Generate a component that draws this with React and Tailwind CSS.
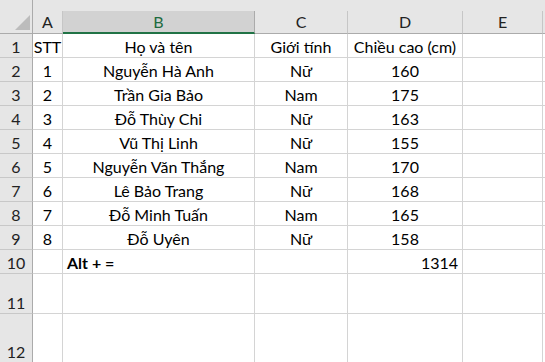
import React from "react";

const cols = [
  { key: "A", w: "w-[30px]", align: "justify-center" },
  { key: "B", w: "w-[192px]", align: "justify-center" },
  { key: "C", w: "w-[93px]", align: "justify-center" },
  { key: "D", w: "w-[115px]", align: "justify-center" },
  { key: "E", w: "w-[80px]", align: "justify-center" },
];

const rows = [
  ["STT", "Họ và tên", "Giới tính", "Chiều cao (cm)", ""],
  ["1", "Nguyễn Hà Anh", "Nữ", "160", ""],
  ["2", "Trần Gia Bảo", "Nam", "175", ""],
  ["3", "Đỗ Thùy Chi", "Nữ", "163", ""],
  ["4", "Vũ Thị Linh", "Nữ", "155", ""],
  ["5", "Nguyễn Văn Thắng", "Nam", "170", ""],
  ["6", "Lê Bảo Trang", "Nữ", "168", ""],
  ["7", "Đỗ Minh Tuấn", "Nam", "165", ""],
  ["8", "Đỗ Uyên", "Nữ", "158", ""],
];

function Cell({ w, children, className = "" }) {
  return (
    <div
      className={`${w} shrink-0 h-full border-r border-[#d4d4d4] flex items-end pb-[3px] overflow-visible whitespace-nowrap ${className}`}
    >
      {children}
    </div>
  );
}

function RowHead({ n }) {
  return (
    <div className="w-[33px] shrink-0 h-full bg-[#e6e6e6] border-r border-[#ababab] border-b border-b-[#c8c8c8] flex items-end justify-center pb-[3px] text-[#222]">
      {n}
    </div>
  );
}

function Row({ n, h = "h-[24px]", children }) {
  return (
    <div className={`flex ${h} shrink-0`}>
      <RowHead n={n} />
      <div className="flex flex-1 h-full border-b border-[#d4d4d4]">{children}</div>
    </div>
  );
}

export default function App() {
  return (
    <div
      className="w-[545px] h-[362px] overflow-hidden bg-white flex flex-col text-[16px] leading-[15px] text-black"
      style={{ fontFamily: "Lato, 'Noto Sans', sans-serif" }}
    >
      {/* Column header */}
      <div className="flex h-[34px] shrink-0 bg-[#e6e6e6]">
        <div className="w-[33px] shrink-0 h-full border-r border-[#ababab] border-b border-b-[#ababab] relative">
          <div
            className="absolute left-[15px] top-[15px] w-[15px] h-[15px] bg-[#bcbcbc]"
            style={{ clipPath: "polygon(100% 0, 100% 100%, 0 100%)" }}
          />
        </div>
        <div className="flex flex-1 flex-col h-full">
          <div className="h-[11px] shrink-0" />
          <div className="flex flex-1">
            {cols.map((c) => (
              <div
                key={c.key}
                className={`${c.w} shrink-0 h-full flex items-center justify-center pb-[1px] border-r ${
                  c.key === "B"
                    ? "bg-[#d2d2d2] border-[#ababab] border-b-2 border-b-[#217346] text-[#1d6b40]"
                    : "border-[#c6c6c6] border-b border-b-[#ababab] text-[#222]"
                }`}
              >
                {c.key}
              </div>
            ))}
            <div className="flex-1 h-full border-b border-[#ababab]" />
          </div>
        </div>
      </div>

      {rows.map((r, i) => (
        <Row key={i} n={i + 1}>
          {cols.map((c, j) => (
            <Cell key={c.key} w={c.w} className={c.align}>
              {r[j]}
            </Cell>
          ))}
          <div className="flex-1" />
        </Row>
      ))}

      <Row n={10}>
        <Cell w="w-[30px]" />
        <Cell w="w-[192px]" className="justify-start pl-[4px] font-bold">
          Alt + =
        </Cell>
        <Cell w="w-[93px]" />
        <Cell w="w-[115px]" className="justify-end pr-[4px]">
          1314
        </Cell>
        <Cell w="w-[80px]" />
        <div className="flex-1" />
      </Row>

      <Row n={11} h="h-[40px]">
        <Cell w="w-[30px]" />
        <Cell w="w-[192px]" />
        <Cell w="w-[93px]" />
        <Cell w="w-[115px]" />
        <Cell w="w-[80px]" />
        <div className="flex-1" />
      </Row>

      <Row n={12} h="h-[49px]">
        <Cell w="w-[30px]" />
        <Cell w="w-[192px]" />
        <Cell w="w-[93px]" />
        <Cell w="w-[115px]" />
        <Cell w="w-[80px]" />
        <div className="flex-1" />
      </Row>
    </div>
  );
}
